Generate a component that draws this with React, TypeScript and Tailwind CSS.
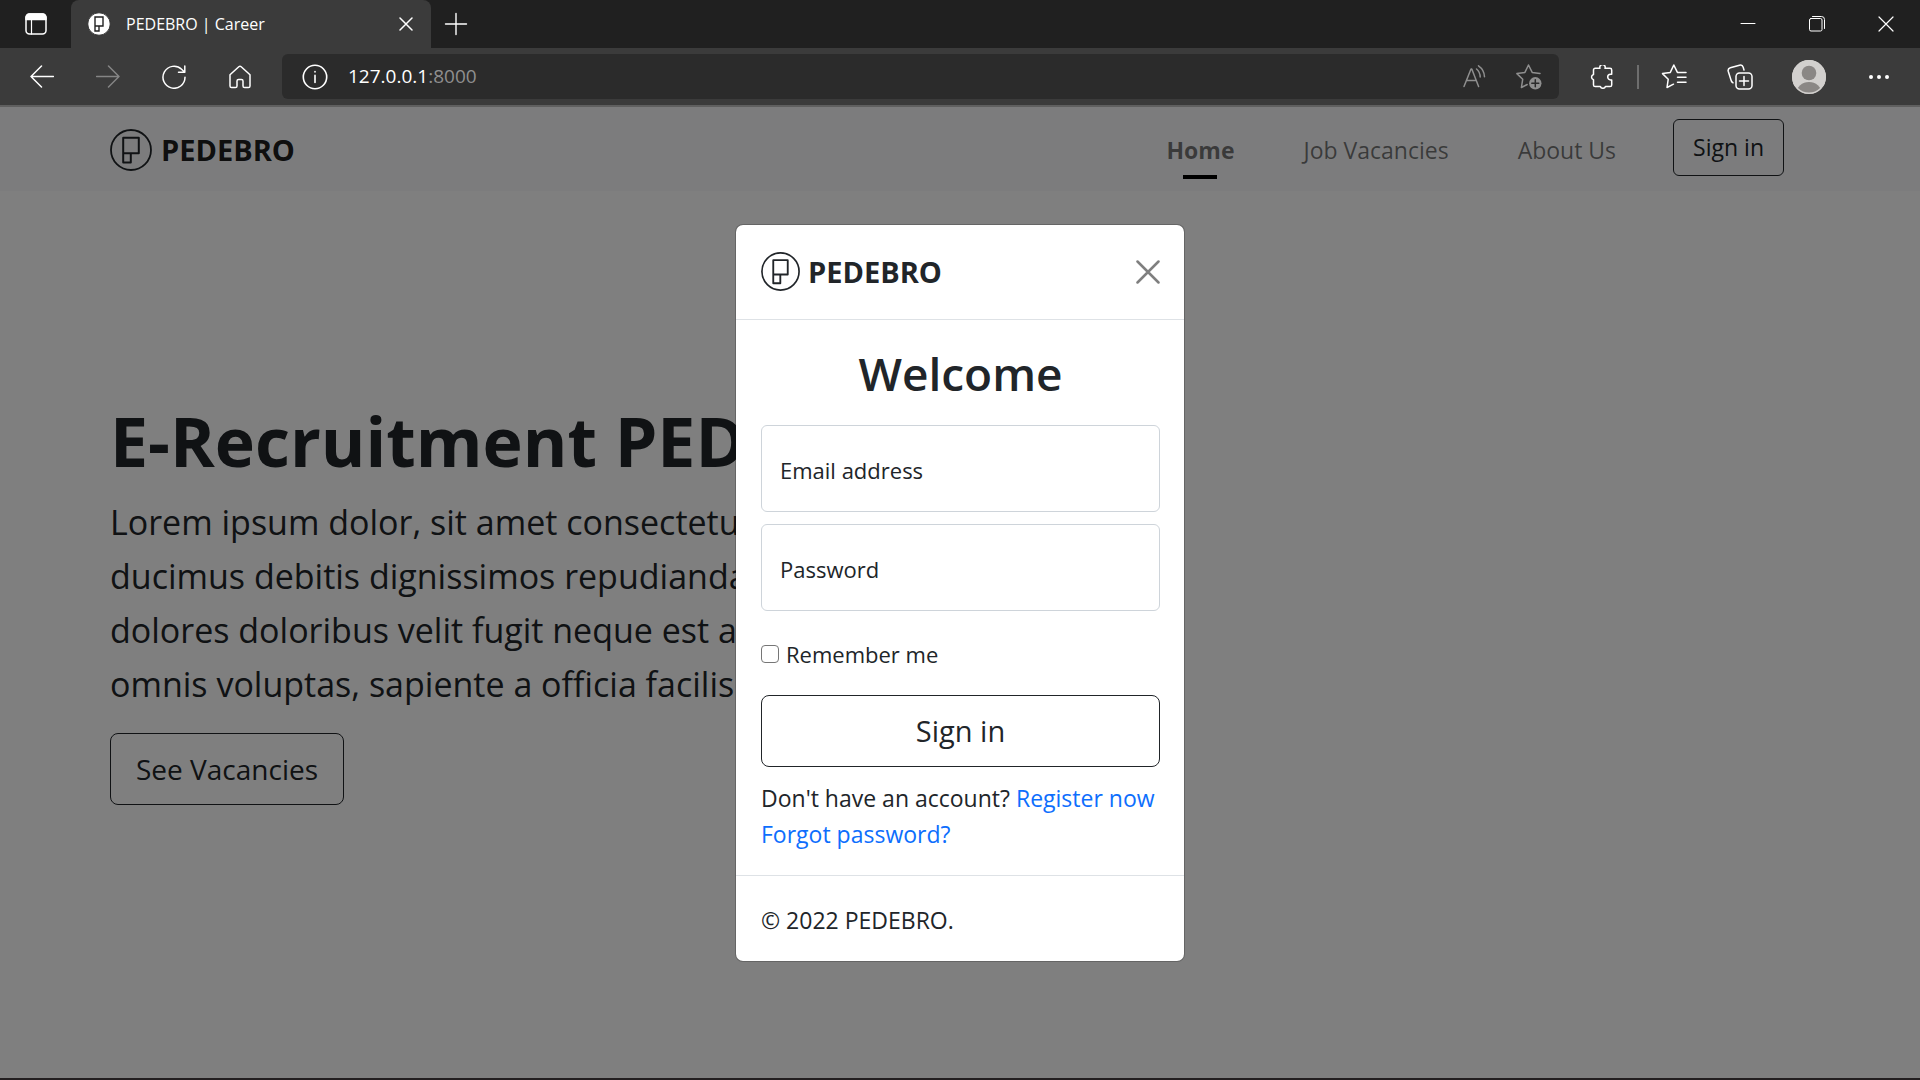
import { type ReactNode } from "react";

type IconProps = { className?: string };

function Icon({ className = "size-6", children, box = "0 0 24 24", width = 1.5 }: IconProps & { children: ReactNode; box?: string; width?: number }) {
  return (
    <svg viewBox={box} className={className} fill="none" stroke="currentColor" strokeWidth={width} strokeLinecap="round" strokeLinejoin="round" aria-hidden="true">
      {children}
    </svg>
  );
}

function Logo({ className = "size-10" }: IconProps) {
  return (
    <svg viewBox="0 0 42 42" className={className} fill="none" stroke="currentColor" aria-hidden="true">
      <circle cx="21" cy="21" r="20" strokeWidth="1.8" />
      <path d="M13.2 8.8h15.6v15.4H13.2z M13.2 24.2v9.4h7.6v-9.4" strokeWidth="2" strokeLinejoin="round" />
    </svg>
  );
}

function TabBar() {
  return (
    <header className="flex h-12 bg-[#202020] text-white">
      <button aria-label="Tab actions" className="flex w-[71px] items-center pl-6">
        <Icon>
          <rect x="2" y="2" width="20" height="20" rx="3.5" />
          <path d="M2 7.5V5.5A3.5 3.5 0 0 1 5.5 2h13A3.5 3.5 0 0 1 22 5.5v2z" fill="currentColor" />
          <path d="M7.5 8v14" strokeWidth="1.2" />
        </Icon>
      </button>
      <div className="flex w-[360px] items-center rounded-t-lg bg-[#3b3b3b] pl-4 pr-3">
        <svg viewBox="0 0 24 24" className="size-6" aria-hidden="true">
          <circle cx="12" cy="12" r="11.2" fill="#fff" stroke="#222" strokeWidth="0.8" />
          <path d="M8 5h8v9H8z M8 14v5h4v-5" fill="none" stroke="#222" strokeWidth="1.4" />
        </svg>
        <span className="ml-[15px] flex-1 text-[16px]">PEDEBRO | Career</span>
        <button aria-label="Close tab" className="p-1.5">
          <Icon className="size-[14px]" box="0 0 14 14">
            <path d="M1 1l12 12M13 1L1 13" />
          </Icon>
        </button>
      </div>
      <button aria-label="New tab" className="flex items-center pl-[13px]">
        <Icon width={1.4}>
          <path d="M12 1.5v21M1.5 12h21" />
        </Icon>
      </button>
      <div className="ml-auto flex">
        <button aria-label="Minimize" className="grid w-[69px] place-items-center">
          <Icon className="size-4" box="0 0 16 16" width={1}>
            <path d="M1 7.5h14" />
          </Icon>
        </button>
        <button aria-label="Restore" className="grid w-[69px] place-items-center">
          <Icon className="size-4" box="0 0 16 16" width={1}>
            <rect x="0.5" y="2.5" width="12.5" height="12.5" rx="1.5" />
            <path d="M3.5 0.5h9a3 3 0 0 1 3 3v9" />
          </Icon>
        </button>
        <button aria-label="Close window" className="grid w-[69px] place-items-center">
          <Icon className="size-4" box="0 0 16 16" width={1.2}>
            <path d="M1 1l14 14M15 1L1 15" />
          </Icon>
        </button>
      </div>
    </header>
  );
}

function Toolbar() {
  const button = "grid h-12 w-[66px] place-items-center";
  return (
    <div className="flex h-[57px] items-center bg-[#3b3b3b] pl-[9px] pr-[7px] text-white">
      <button aria-label="Back" className={button}>
        <Icon><path d="M23.5 11.5H1M11.5 1L1 11.5 11.5 22" /></Icon>
      </button>
      <button aria-label="Forward" className={button + " text-[#858585]"}>
        <Icon><path d="M.5 11.5H23M12.5 1L23 11.5 12.5 22" /></Icon>
      </button>
      <button aria-label="Refresh" className={button}>
        <Icon><path d="M23 12.3A11 11 0 1 1 19.6 4.3L22.8 7.3M22.8 1v6.3h-6.3" /></Icon>
      </button>
      <button aria-label="Home" className={button}>
        <Icon><path d="M2 9.8 10.8 1.8a1.8 1.8 0 0 1 2.4 0L22 9.8V21a1.6 1.6 0 0 1-1.6 1.6h-3.8A1.6 1.6 0 0 1 15 21v-5a1.6 1.6 0 0 0-1.6-1.6h-2.8A1.6 1.6 0 0 0 9 16v5a1.6 1.6 0 0 1-1.6 1.6H3.6A1.6 1.6 0 0 1 2 21z" /></Icon>
      </button>
      <div className="ml-[9px] flex h-[45px] flex-1 items-center rounded-md bg-[#2b2b2b] pl-5 pr-[17px]">
        <button aria-label="View site information">
          <Icon className="size-[26px]">
            <circle cx="12" cy="12" r="10.8" />
            <path d="M12 10.5v6.5M12 7v.4" />
          </Icon>
        </button>
        <div className="ml-5 flex-1 text-[19px]">
          127.0.0.1<span className="text-[#8f8f8f]">:8000</span>
        </div>
        <button aria-label="Read aloud" className="mr-7 text-[#8f8f8f]">
          <Icon className="size-[26px]" box="0 0 26 26">
            <path d="M2 22.5 9 5h.8l6.8 17.500M4.5 16.500h9.800M14.500 5a11 11 0 0 1 3.700 8M16.500 1.800a14 14 0 0 1 6 11" />
          </Icon>
        </button>
        <button aria-label="Add to favorites" className="text-[#8f8f8f]">
          <Icon className="size-[26px]" box="0 0 26 26">
            <path d="M24 9.500l-7.800-1.100L12.500 1 8.900 8.400l-8 1.200 5.800 5.700-1.300 8.200 5.800-3" />
            <circle cx="19.300" cy="19.300" r="6.200" fill="currentColor" stroke="none" />
            <path d="M19.300 15.800v7M15.800 19.300h7" stroke="#2b2b2b" />
          </Icon>
        </button>
      </div>
      <button aria-label="Extensions" className={button + " ml-[10px]"}>
        <Icon><path d="M3.500 5A1.700 1.700 0 0 1 5.200 3.300H10a2.700 2.700 0 1 1 5 0h5A1.700 1.700 0 0 1 21.700 5v4.300h-1.200a2.800 2.800 0 0 0 0 5.600h1.200v5a1.700 1.700 0 0 1-1.700 1.700h-4.600a2.700 2.700 0 0 1-5 0H5.200a1.700 1.700 0 0 1-1.700-1.700v-5.200a2.700 2.700 0 0 1 0-5.200z" /></Icon>
      </button>
      <div className="mx-0.5 h-6 w-0.5 bg-[#6e6e6e]" />
      <button aria-label="Favorites" className={button}>
        <Icon className="size-[26px]" box="0 0 26 26">
          <path d="M12.500 20.200 6 23.500l1.200-8.200L1.500 9.600l7.800-1.200L12.800 1l3.600 7.400H25M16.500 13.300H25M16.500 18.300H25" />
        </Icon>
      </button>
      <button aria-label="Collections" className={button}>
        <Icon className="size-[26px]" box="0 0 26 26">
          <rect x="9" y="9" width="16" height="16" rx="3.500" />
          <path d="M17 12.500v9M12.500 17h9M6 18.800A4 4 0 0 1 4 16L1.300 7.500a3 3 0 0 1 2-3.700L12.500 1.200a3 3 0 0 1 3.700 2L17 6" />
        </Icon>
      </button>
      <button aria-label="Profile" className="grid w-[72px] place-items-center">
        <svg viewBox="0 0 34 34" className="size-[34px]" aria-hidden="true">
          <clipPath id="avatar"><circle cx="17" cy="17" r="17" /></clipPath>
          <g clipPath="url(#avatar)">
            <rect width="34" height="34" fill="#d2d0ce" />
            <circle cx="17" cy="13" r="7.300" fill="#8a8785" />
            <ellipse cx="17" cy="33" rx="12.500" ry="11" fill="#8a8785" />
          </g>
          <circle cx="17" cy="17" r="16.300" fill="none" stroke="#d2d0ce" strokeWidth="1.400" />
        </svg>
      </button>
      <button aria-label="Settings and more" className="grid w-[68px] place-items-center">
        <Icon><path d="M4 12h.01M12 12h.01M20 12h.01" strokeWidth="4" /></Icon>
      </button>
    </div>
  );
}

function Navbar() {
  return (
    <nav className="flex h-[84px] items-center bg-[#f8f9fa] pt-0.5 pl-[110px] pr-[136px] text-[23px] text-black/55">
      <a href="#home" className="mr-auto flex items-center gap-[9px] text-[29px] font-bold text-black/90">
        <Logo className="size-[42px] text-[#212529]" />
        PEDEBRO
      </a>
      <div className="flex items-center gap-[69px]">
        <a href="#home" className="relative font-bold text-black/55 after:absolute after:left-1/2 after:-bottom-3 after:h-1 after:w-[34px] after:-translate-x-1/2 after:bg-black">
          Home
        </a>
        <a href="#vacancies">Job Vacancies</a>
        <a href="#about">About Us</a>
      </div>
      <button className="mb-1.5 ml-[57px] h-[57px] rounded-md border-[1.5px] border-[#212529] px-[19px] text-[#212529]">Sign in</button>
    </nav>
  );
}

const lines = [
  "Lorem ipsum dolor, sit amet consectetur",
  "ducimus debitis dignissimos repudiandae",
  "dolores doloribus velit fugit neque est at",
  "omnis voluptas, sapiente a officia facilis",
];

function Hero() {
  return (
    <main className="px-[110px] pt-[207px]">
      <h1 className="mb-[11px] text-[68px] leading-[86px] font-bold">E-Recruitment PEDEBRO</h1>
      <p className="mb-[22px] text-[34px] leading-[54px]">
        {lines.map((line) => (
          <span key={line} className="block whitespace-nowrap">{line}</span>
        ))}
      </p>
      <button className="h-[72px] rounded-lg border-[1.5px] border-[#212529] px-[25px] text-[28px]">See Vacancies</button>
    </main>
  );
}

function Field({ id, label, type }: { id: string; label: string; type: string }) {
  return (
    <div className="relative text-[22px]">
      <input id={id} type={type} className="block h-[87px] w-full rounded-md border border-[#ced4da] px-[18px]" />
      <label htmlFor={id} className="absolute inset-y-0 left-[19px] flex items-center pt-1">{label}</label>
    </div>
  );
}

function SignInDialog() {
  return (
    <div role="dialog" aria-label="Sign in" className="w-[450px] rounded-lg border border-black/20 bg-white bg-clip-padding text-[23px] leading-9">
      <div className="flex h-[95px] items-center border-b border-[#dee2e6] pr-6 pl-[25px]">
        <Logo className="size-[39px]" />
        <h5 className="ml-2 flex-1 text-[29px] font-bold">PEDEBRO</h5>
        <button aria-label="Close" className="text-[#7f7f7f]">
          <Icon box="0 0 24 24" width={2.5}>
            <path d="M1.500 1.500l21 21M22.500 1.500l-21 21" />
          </Icon>
        </button>
      </div>
      <form className="pt-6 pr-6 pb-[23px] pl-[25px]" onSubmit={(e) => e.preventDefault()}>
        <h1 className="mb-[23px] text-center text-[46px] leading-[58px] font-semibold">Welcome</h1>
        <div className="flex flex-col gap-3">
          <Field id="email" label="Email address" type="email" />
          <Field id="password" label="Password" type="password" />
        </div>
        <label className="mt-[25px] mb-[23px] flex items-center gap-[7px] text-[22px]">
          <input type="checkbox" className="size-[18px] appearance-none rounded-sm border-[1.5px] border-[#767676]" />
          Remember me
        </label>
        <button className="mb-[13px] block h-[72px] w-full rounded-lg border-[1.5px] border-[#212529] text-[29px]">Sign in</button>
        <p className="whitespace-nowrap">
          Don't have an account? <a href="#register" className="text-[#0d6efd]">Register now</a>
        </p>
        <a href="#forgot" className="block text-[#0d6efd]">Forgot password?</a>
      </form>
      <div className="border-t border-[#dee2e6] pt-[26px] pr-6 pb-[23px] pl-[25px]">© 2022 PEDEBRO.</div>
    </div>
  );
}

export default function App() {
  return (
    <div className="flex min-h-screen flex-col bg-[#202020] font-['Open_Sans',sans-serif]">
      <TabBar />
      <Toolbar />
      <div className="relative flex flex-1 flex-col border-t-2 border-[#5f5f5f] bg-white text-[#212529]">
        <Navbar />
        <Hero />
        <div className="absolute inset-0 grid place-items-center bg-black/50">
          <SignInDialog />
        </div>
      </div>
      <div className="h-0.5 bg-[#231f20]" />
    </div>
  );
}
